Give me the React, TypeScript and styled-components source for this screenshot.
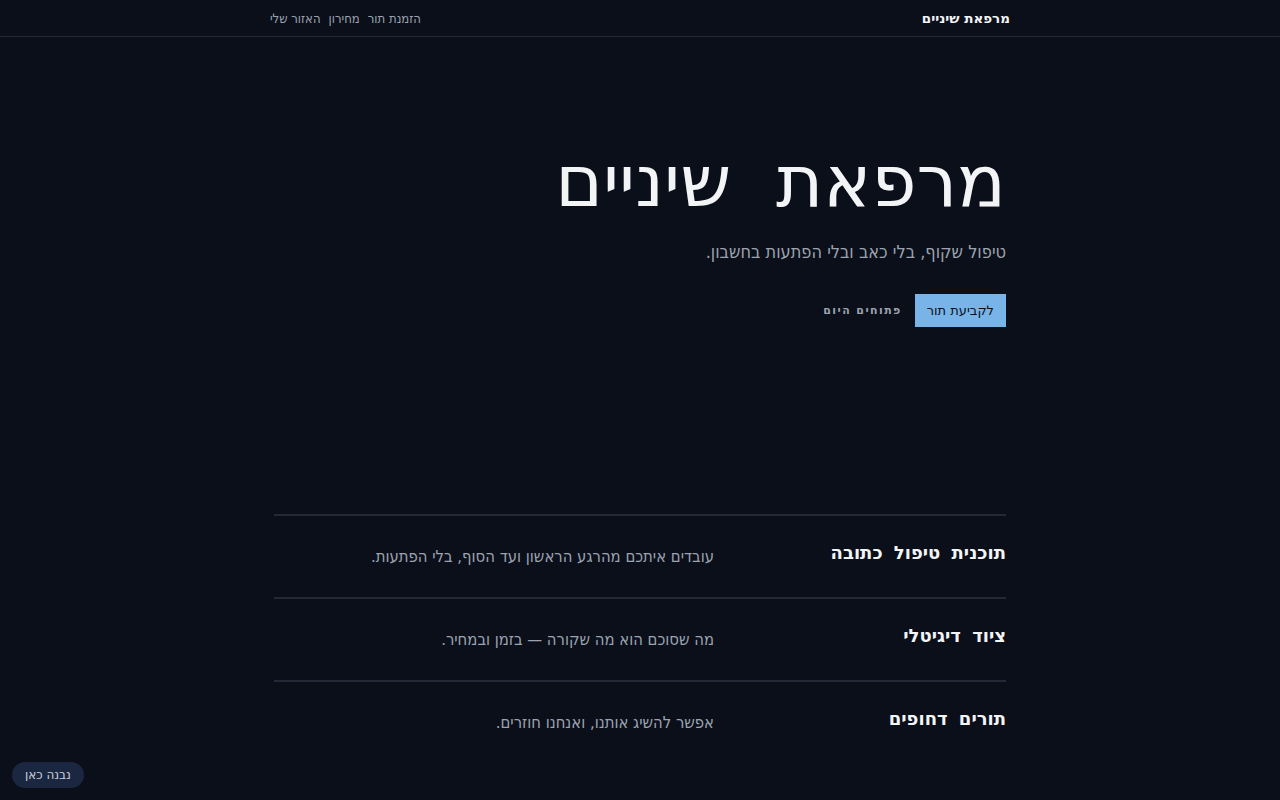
import React from 'react'
import styled, { createGlobalStyle } from 'styled-components'

const GlobalStyle = createGlobalStyle`
  html, body {
    margin: 0;
    padding: 0;
    background: #0a0f1a;
  }
  body {
    font-family: 'DejaVu Sans', 'Noto Sans', sans-serif;
    color: #f3f4f6;
  }
  * {
    box-sizing: border-box;
  }
`

const Page = styled.div`
  direction: rtl;
  min-height: 800px;
  background: #0a0f1a;
`

const Header = styled.header`
  height: 37px;
  border-bottom: 1px solid #232936;
`

const HeaderInner = styled.div`
  width: 740px;
  height: 100%;
  margin: 0 auto;
  display: flex;
  align-items: center;
  justify-content: space-between;
`

const Brand = styled.div`
  font-size: 13.5px;
  font-weight: 700;
  color: #f3f4f6;
`

const Nav = styled.nav`
  display: flex;
  gap: 8px;
`

const NavLink = styled.a`
  font-size: 13px;
  font-stretch: condensed;
  color: #9ca3af;
  text-decoration: none;
`

const Main = styled.main`
  width: 732px;
  margin: 0 auto;
`

const Hero = styled.section`
  padding-top: 99px;
  height: 477px;
`

const Title = styled.h1`
  margin: 0;
  font-size: 72px;
  font-weight: 400;
  line-height: 90px;
  word-spacing: 22px;
  color: #f3f4f6;
`

const Subtitle = styled.p`
  margin: 15px 0 0;
  font-size: 18px;
  line-height: 21px;
  font-stretch: condensed;
  color: #9ca3af;
`

const Actions = styled.div`
  display: flex;
  align-items: center;
  gap: 13px;
  margin-top: 32px;
`

const PrimaryButton = styled.button`
  height: 33px;
  padding: 0 12px;
  border: none;
  border-radius: 0;
  background: #78b4e8;
  color: #0a0f1a;
  font-family: inherit;
  font-size: 13px;
`

const GhostButton = styled.button`
  height: 33px;
  padding: 0;
  border: none;
  background: transparent;
  color: #9ca3af;
  font-family: inherit;
  font-size: 11px;
  font-weight: 700;
  letter-spacing: 1.4px;
`

const Features = styled.section``

const FeatureRow = styled.div`
  display: grid;
  grid-template-columns: 292px 1fr;
  align-items: center;
  height: 83px;
  border-top: 2px solid #232936;
`

const FeatureTitle = styled.h3`
  margin: 0;
  font-size: 18px;
  font-weight: 700;
  word-spacing: 5px;
  color: #f3f4f6;
  padding-bottom: 8px;
`

const FeatureText = styled.p`
  margin: 0;
  font-size: 16.5px;
  font-stretch: condensed;
  color: #9ca3af;
`

const BuiltBadge = styled.div`
  position: fixed;
  left: 12px;
  bottom: 12px;
  height: 26px;
  padding: 0 13px;
  border-radius: 13px;
  background: #1b2740;
  color: #c9d1de;
  font-size: 12px;
  display: flex;
  align-items: center;
  direction: rtl;
`

const features = [
  { title: 'תוכנית טיפול כתובה', text: 'עובדים איתכם מהרגע הראשון ועד הסוף, בלי הפתעות.' },
  { title: 'ציוד דיגיטלי', text: 'מה שסוכם הוא מה שקורה — בזמן ובמחיר.' },
  { title: 'תורים דחופים', text: 'אפשר להשיג אותנו, ואנחנו חוזרים.' },
]

export default function App() {
  return (
    <Page>
      <GlobalStyle />
      <Header>
        <HeaderInner>
          <Brand>מרפאת שיניים</Brand>
          <Nav>
            <NavLink href="#">הזמנת תור</NavLink>
            <NavLink href="#">מחירון</NavLink>
            <NavLink href="#">האזור שלי</NavLink>
          </Nav>
        </HeaderInner>
      </Header>
      <Main>
        <Hero>
          <Title>מרפאת שיניים</Title>
          <Subtitle>טיפול שקוף, בלי כאב ובלי הפתעות בחשבון.</Subtitle>
          <Actions>
            <PrimaryButton>לקביעת תור</PrimaryButton>
            <GhostButton>פתוחים היום</GhostButton>
          </Actions>
        </Hero>
        <Features>
          {features.map((f) => (
            <FeatureRow key={f.title}>
              <FeatureTitle>{f.title}</FeatureTitle>
              <FeatureText>{f.text}</FeatureText>
            </FeatureRow>
          ))}
        </Features>
      </Main>
      <BuiltBadge>נבנה כאן</BuiltBadge>
    </Page>
  )
}
